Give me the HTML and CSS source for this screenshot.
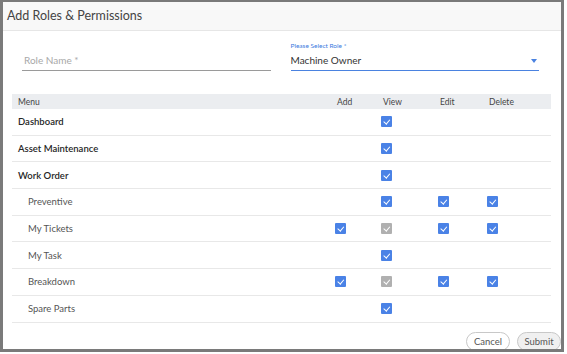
FILE: index.html
```html
<!DOCTYPE html>
<html lang="en">
<head>
    <meta charset="UTF-8">
    <title>Add Roles &amp; Permissions</title>
    <link rel="stylesheet" href="styles.css">
</head>
<body>

<div class="modal">
    <div class="modal-header">Add Roles &amp; Permissions</div>

    <div class="form-row">
        <div class="field">
            <div class="field-label">&nbsp;</div>
            <div class="field-input placeholder">Role Name *</div>
        </div>
        <div class="field active">
            <div class="field-label">Please Select Role *</div>
            <div class="field-input">
                Machine Owner
                <span class="caret"></span>
            </div>
        </div>
    </div>

    <table class="perm-table">
        <thead>
            <tr>
                <th class="col-menu">Menu</th>
                <th class="col-add">Add</th>
                <th class="col-view">View</th>
                <th class="col-edit">Edit</th>
                <th class="col-delete">Delete</th>
            </tr>
        </thead>
        <tbody>
            <tr class="parent">
                <td>Dashboard</td>
                <td></td>
                <td><span class="check"></span></td>
                <td></td>
                <td></td>
            </tr>
            <tr class="parent">
                <td>Asset Maintenance</td>
                <td></td>
                <td><span class="check"></span></td>
                <td></td>
                <td></td>
            </tr>
            <tr class="parent">
                <td>Work Order</td>
                <td></td>
                <td><span class="check"></span></td>
                <td></td>
                <td></td>
            </tr>
            <tr class="child">
                <td>Preventive</td>
                <td></td>
                <td><span class="check"></span></td>
                <td><span class="check"></span></td>
                <td><span class="check"></span></td>
            </tr>
            <tr class="child">
                <td>My Tickets</td>
                <td><span class="check"></span></td>
                <td><span class="check disabled"></span></td>
                <td><span class="check"></span></td>
                <td><span class="check"></span></td>
            </tr>
            <tr class="child">
                <td>My Task</td>
                <td></td>
                <td><span class="check"></span></td>
                <td></td>
                <td></td>
            </tr>
            <tr class="child">
                <td>Breakdown</td>
                <td><span class="check"></span></td>
                <td><span class="check disabled"></span></td>
                <td><span class="check"></span></td>
                <td><span class="check"></span></td>
            </tr>
            <tr class="child">
                <td>Spare Parts</td>
                <td></td>
                <td><span class="check"></span></td>
                <td></td>
                <td></td>
            </tr>
        </tbody>
    </table>

    <div class="modal-footer">
        <button class="btn">Cancel</button>
        <button class="btn btn-submit">Submit</button>
    </div>
</div>

</body>
</html>
```

FILE: styles.css
```css
body {
    margin: 0;
    background-color: #fff;
    font-family: 'Lato', 'Open Sans', sans-serif;
    color: #333;
}
.modal {
    width: 558px;
    height: 347px;
    border: 3px solid #7a7a7a;
    border-top-width: 2px;
    background-color: #fff;
    overflow: hidden;
}
.modal-header {
    height: 28px;
    line-height: 27px;
    padding-left: 4px;
    background-color: #f8f8f8;
    border-bottom: 1px solid #e6e6e6;
    font-size: 12.5px;
    color: #444;
}

/* role form */
.form-row {
    display: flex;
    gap: 20px;
    padding: 9px 22px 0 19px;
    height: 54px;
}
.field {
    flex: 1;
}
.field-label {
    font-size: 6.5px;
    height: 11px;
    line-height: 11px;
    color: #3d7be0;
}
.field-input {
    position: relative;
    height: 19px;
    line-height: 18px;
    font-size: 10px;
    color: #333;
    border-bottom: 1px solid #9a9a9a;
}
.field-input.placeholder {
    padding-left: 2px;
    color: #a8a8a8;
}
.field.active .field-input {
    border-bottom: 1.5px solid #4a82e0;
}
.caret {
    position: absolute;
    right: 2px;
    top: 8px;
    border-left: 3.5px solid transparent;
    border-right: 3.5px solid transparent;
    border-top: 4px solid #4a82e0;
}

/* permissions table */
.perm-table {
    margin-left: 9px;
    width: 539px;
    border-collapse: collapse;
    font-size: 9.5px;
}
.perm-table th {
    height: 15px;
    padding: 0;
    background-color: #ebedf0;
    font-weight: 400;
    font-size: 8.5px;
    color: #444;
    text-align: left;
}
.perm-table th.col-menu {
    padding-left: 6px;
}
.col-add { width: 46px; }
.col-view { width: 57px; }
.col-edit { width: 49px; }
.col-delete { width: 62px; }
.perm-table td {
    height: 25.7px;
    padding: 0;
    border-bottom: 1px solid #e8e8e8;
}
.perm-table tr.parent td:first-child {
    padding-left: 6px;
    font-weight: 600;
    color: #262626;
}
.perm-table tr.child td:first-child {
    padding-left: 16px;
    color: #555;
}
.check {
    display: block;
    width: 11px;
    height: 11px;
    margin-left: -2px;
    border-radius: 1px;
    background-color: #4a82e6;
    position: relative;
}
.check::after {
    content: '';
    position: absolute;
    left: 3.5px;
    top: 2px;
    width: 2.5px;
    height: 4.5px;
    border-right: 1px solid #fff;
    border-bottom: 1px solid #fff;
    transform: rotate(40deg);
}
.check.disabled {
    background-color: #b0b0b0;
}

/* footer */
.modal-footer {
    display: flex;
    justify-content: flex-end;
    gap: 7px;
    padding: 9px 0 0;
}
.btn {
    height: 19px;
    width: 44px;
    padding: 0;
    border: 1px solid #c8c8c8;
    border-radius: 10px;
    background-color: #fff;
    font-family: 'Lato', 'Open Sans', sans-serif;
    font-size: 9.5px;
    color: #555;
}
.btn-submit {
    background-color: #f0f0f0;
}
```
